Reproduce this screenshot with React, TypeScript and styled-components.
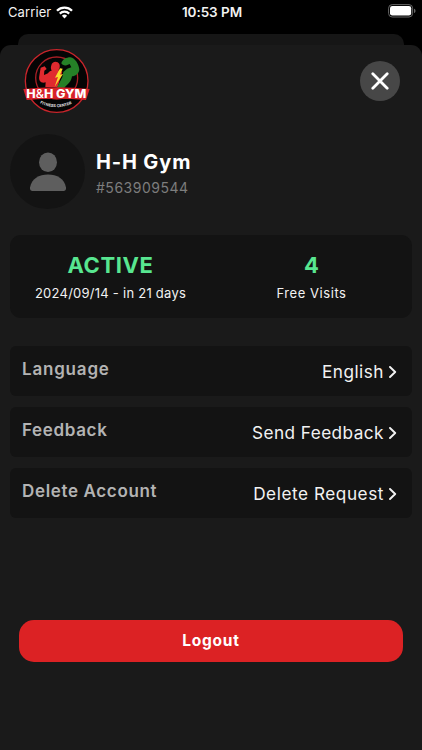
import styled, { createGlobalStyle } from "styled-components";

const GlobalStyle = createGlobalStyle`
  * {
    box-sizing: border-box;
  }
  body {
    margin: 0;
    background: #000;
    color: #f2f2f2;
    font-family: Inter, "Liberation Sans", sans-serif;
  }
  button {
    border: 0;
    padding: 0;
    color: inherit;
    font-family: inherit;
    cursor: pointer;
  }
`;

const settings = [
  { label: "Language", value: "English", labelSpacing: 0.8, valueSpacing: 0.5 },
  { label: "Feedback", value: "Send Feedback", labelSpacing: 0.65, valueSpacing: 0.45 },
  { label: "Delete Account", value: "Delete Request", labelSpacing: 0.65, valueSpacing: 0.55 },
];

function Logo() {
  return (
    <svg width="68" height="66" viewBox="40 26 204 198">
      <circle cx="141" cy="125" r="94" fill="#050505" stroke="#c9252b" strokeWidth="4" />
      <circle cx="141" cy="116" r="63" fill="none" stroke="#a81f25" strokeWidth="4" />
      <path
        d="M125 78c2-12 18-14 24-4 3 7 1 14-3 19l12 4-14 46h-37l1-14c-15 4-22-6-19-20l4-24 12-4 6 8-7 5-1 13 12-5c3-5 6-7 11-8-3-5-3-10-1-16z"
        fill="#e02a2f"
      />
      <path
        d="M155 72c3-12 15-18 27-18 15 2 26 22 27 37-2 12-12 19-22 20-2 15-12 24-23 34h-23l17-31 3-16c8-8 15-12 24-14l-5-10-9 4c-7 2-13-1-16-6z"
        fill="#258027"
      />
      <path d="M151 87l-15 28 9-2-10 29 25-38-9 2 8-18z" fill="#f8dd29" />
      <path
        d="M41 149q100-10 199 0l-11 33q-88-8-178 0z"
        fill="#d8232a"
      />
      <text
        x="140"
        y="175.5"
        fill="#fff"
        fontSize="34"
        fontWeight="800"
        textAnchor="middle"
        textLength="180"
        lengthAdjust="spacingAndGlyphs"
      >
        H<tspan fontWeight="500">&amp;</tspan>H GYM
      </text>
      <path id="center-arc" d="M91 192q50 23 98 0" fill="none" />
      <text fill="#e8e8e8" fontSize="11.5" fontWeight="700">
        <textPath href="#center-arc" textLength="99" lengthAdjust="spacingAndGlyphs">
          FITNESS CENTER
        </textPath>
      </text>
    </svg>
  );
}

export default function App() {
  return (
    <Screen>
      <GlobalStyle />
      <StatusBar>
        <Carrier>
          Carrier
          <svg width="17" height="13" viewBox="0 0 17 13" fill="none" stroke="#fff">
            <path d="M1 4.7a10.6 10.6 0 0 1 15 0" strokeWidth="2.3" />
            <path d="M3.8 7.6a6.7 6.7 0 0 1 9.4 0" strokeWidth="2.2" />
            <path d="M8.5 12.4L5.9 9.8a3.8 3.8 0 0 1 5.2 0z" fill="#fff" stroke="none" />
          </svg>
        </Carrier>
        <Time>10:53 PM</Time>
        <Battery>
          <svg width="28" height="14" viewBox="0 0 28 14">
            <rect x="0.6" y="0.6" width="24" height="12.4" rx="3.6" fill="none" stroke="#666" />
            <rect x="2" y="2" width="21.2" height="9.6" rx="2.3" fill="#fff" />
            <path d="M26 4.7c2 .6 2 3.7 0 4.3z" fill="#666" />
          </svg>
        </Battery>
      </StatusBar>
      <BackSheet />
      <Sheet>
        <Header>
          <Logo />
          <CloseButton aria-label="Close">
            <svg width="18" height="18" viewBox="0 0 18 18" stroke="#fff" strokeWidth="2.8" strokeLinecap="round">
              <path d="M1.8 1.8l14.4 14.4M16.2 1.8L1.8 16.2" />
            </svg>
          </CloseButton>
        </Header>
        <Profile>
          <Avatar>
            <svg width="36" height="40" viewBox="0 0 36 40" fill="#5e5e5e">
              <ellipse cx="18" cy="10.2" rx="9" ry="9.8" />
              <path d="M0 35.5C1.5 27 9 22.6 18 22.6S34.5 27 36 35.5c.3 2-.8 3.5-2.5 3.5h-31C.8 39-.3 37.5 0 35.5z" />
            </svg>
          </Avatar>
          <div>
            <Name>H-H Gym</Name>
            <MemberId>#563909544</MemberId>
          </div>
        </Profile>
        <Stats>
          <Stat>
            <StatValue $spacing={0.6}>ACTIVE</StatValue>
            <StatText $spacing={0.25}>2024/09/14 - in 21 days</StatText>
          </Stat>
          <Stat>
            <StatValue $spacing={0}>4</StatValue>
            <StatText $spacing={0.55}>Free Visits</StatText>
          </Stat>
        </Stats>
        <Settings>
          {settings.map((item) => (
            <Row key={item.label}>
              <Label $spacing={item.labelSpacing}>{item.label}</Label>
              <Value $spacing={item.valueSpacing}>
                {item.value}
                <svg width="8" height="12" viewBox="0 0 8 12" fill="none" stroke="#f2f2f2" strokeWidth="1.9">
                  <path d="M1 1l5.2 5L1 11" strokeLinecap="round" strokeLinejoin="round" />
                </svg>
              </Value>
            </Row>
          ))}
        </Settings>
        <LogoutButton>Logout</LogoutButton>
      </Sheet>
    </Screen>
  );
}

const Screen = styled.div`
  width: 422px;
  height: 750px;
  display: flex;
  flex-direction: column;
  overflow: hidden;
  background: #000;
`;

const StatusBar = styled.div`
  height: 34px;
  flex-shrink: 0;
  display: grid;
  grid-template-columns: 1fr auto 1fr;
  padding: 4px 6px 0 8px;
  line-height: 16px;
`;

const Carrier = styled.div`
  height: 16px;
  display: flex;
  align-items: center;
  gap: 5px;
  font-size: 13px;
  letter-spacing: 0.1px;
`;

const Time = styled.div`
  font-size: 13.5px;
  font-weight: 600;
  letter-spacing: -0.05px;
`;

const Battery = styled.div`
  display: flex;
  justify-content: flex-end;
`;

const BackSheet = styled.div`
  height: 11px;
  flex-shrink: 0;
  margin: 0 18px;
  border-radius: 10px 10px 0 0;
  background: #161616;
`;

const Sheet = styled.div`
  flex: 1;
  display: flex;
  flex-direction: column;
  padding: 3px 10px 0;
  border-radius: 11px 11px 0 0;
  background: #1a1a1a;
`;

const Header = styled.div`
  height: 66px;
  display: flex;
  align-items: center;
  justify-content: space-between;
  padding: 0 12px 0 13px;
`;

const CloseButton = styled.button`
  width: 40px;
  height: 40px;
  display: flex;
  align-items: center;
  justify-content: center;
  border-radius: 50%;
  background: #474747;
`;

const Profile = styled.div`
  display: flex;
  align-items: center;
  gap: 11px;
  margin-top: 20px;
`;

const Avatar = styled.div`
  width: 75px;
  height: 75px;
  display: flex;
  align-items: center;
  justify-content: center;
  border-radius: 50%;
  background: #131313;
`;

const Name = styled.div`
  padding-top: 2px;
  font-size: 20px;
  font-weight: 700;
  line-height: 26px;
  letter-spacing: 0.85px;
  color: #fff;
`;

const MemberId = styled.div`
  font-size: 14px;
  line-height: 18px;
  margin: 4px 0 0;
  letter-spacing: 0.5px;
  color: #7d7d7d;
`;

const Stats = styled.div`
  height: 83px;
  display: flex;
  margin-top: 26px;
  padding-top: 16px;
  border-radius: 11px;
  background: #131313;
`;

const Stat = styled.div`
  flex: 1;
  text-align: center;
`;

const StatValue = styled.div<{ $spacing: number }>`
  font-size: 22px;
  font-weight: 700;
  line-height: 28px;
  letter-spacing: ${(props) => props.$spacing}px;
  color: #58e690;
`;

const StatText = styled.div<{ $spacing: number }>`
  margin-top: 5px;
  font-size: 13px;
  line-height: 18px;
  letter-spacing: ${(props) => props.$spacing}px;
`;

const Settings = styled.div`
  display: flex;
  flex-direction: column;
  gap: 11px;
  margin-top: 28px;
`;

const Row = styled.div`
  height: 50px;
  display: flex;
  align-items: center;
  justify-content: space-between;
  padding: 0 15px 0 12px;
  border-radius: 6px;
  background: #131313;
`;

const Label = styled.span<{ $spacing: number }>`
  padding-bottom: 4px;
  font-size: 17px;
  font-weight: 600;
  letter-spacing: ${(props) => props.$spacing}px;
  color: #b3b3b3;
`;

const Value = styled.span<{ $spacing: number }>`
  display: flex;
  align-items: center;
  gap: 5px;
  padding-top: 1px;
  font-size: 17.2px;
  letter-spacing: ${(props) => props.$spacing}px;
`;

const LogoutButton = styled.button`
  height: 42px;
  margin: 102px 9px 0;
  padding-bottom: 2px;
  border-radius: 15px;
  background: #dc2224;
  color: #fff;
  font-size: 15.5px;
  font-weight: 700;
  letter-spacing: 0.75px;
`;
